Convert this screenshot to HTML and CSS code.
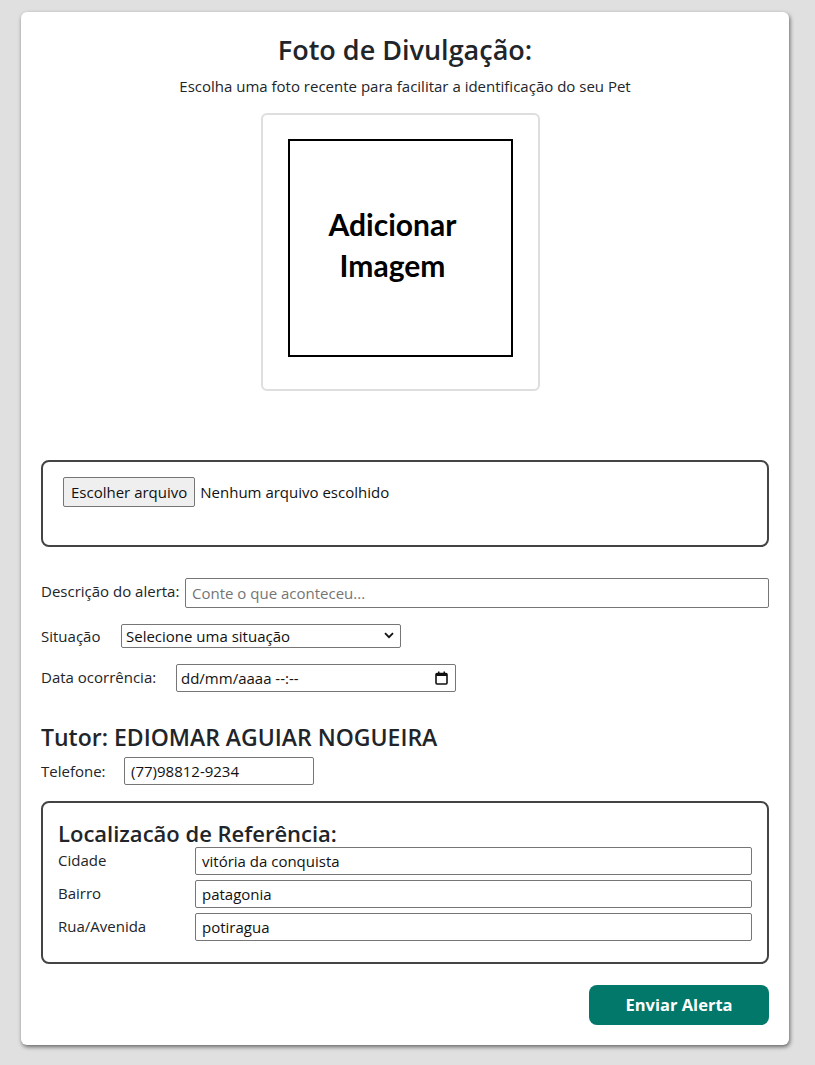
FILE: index.html
```html
<!DOCTYPE html>
<html lang="pt-BR">
<head>
<meta charset="utf-8">
<title>Alerta</title>
<link rel="stylesheet" href="styles.css">
</head>
<body>
<main class="card">
  <h1 class="title">Foto de Divulgação:</h1>
  <p class="subtitle">Escolha uma foto recente para facilitar a identificação do seu Pet</p>
  <div class="photo-frame">
    <div class="photo-placeholder">Adicionar<br>Imagem</div>
  </div>

  <div class="file-box">
    <button class="file-btn" type="button">Escolher arquivo</button>
    <span class="file-name">Nenhum arquivo escolhido</span>
  </div>

  <div class="row row-desc">
    <label class="lbl">Descrição do alerta:</label>
    <div class="field field-desc"><span class="placeholder">Conte o que aconteceu...</span></div>
  </div>
  <div class="row row-sit">
    <label class="lbl lbl-sit">Situação</label>
    <div class="field field-select"><span>Selecione uma situação</span>
      <svg class="chev" width="10" height="7" viewBox="0 0 10 7"><path d="M1 1.2 L5 5.2 L9 1.2" fill="none" stroke="#111" stroke-width="1.8"/></svg>
    </div>
  </div>
  <div class="row row-date">
    <label class="lbl lbl-date">Data ocorrência:</label>
    <div class="field field-date"><span>dd/mm/aaaa --:--</span>
      <svg class="cal" width="13" height="14" viewBox="0 0 13 14"><rect x="1" y="2.5" width="11" height="10.5" rx="1" fill="none" stroke="#111" stroke-width="1.6"/><rect x="1" y="2.5" width="11" height="2.5" fill="#111"/><rect x="3" y="0.5" width="1.5" height="2.5" fill="#111"/><rect x="8.5" y="0.5" width="1.5" height="2.5" fill="#111"/></svg>
    </div>
  </div>

  <h2 class="tutor">Tutor: EDIOMAR AGUIAR NOGUEIRA</h2>
  <div class="row row-tel">
    <label class="lbl lbl-tel">Telefone:</label>
    <div class="field field-tel">(77)98812-9234</div>
  </div>

  <section class="loc-box">
    <h3 class="loc-title">Localizacão de Referência:</h3>
    <div class="loc-row">
      <label class="loc-lbl">Cidade</label>
      <div class="field loc-field">vitória da conquista</div>
    </div>
    <div class="loc-row">
      <label class="loc-lbl">Bairro</label>
      <div class="field loc-field">patagonia</div>
    </div>
    <div class="loc-row">
      <label class="loc-lbl">Rua/Avenida</label>
      <div class="field loc-field">potiragua</div>
    </div>
  </section>

  <div class="actions">
    <button class="send-btn" type="button">Enviar Alerta</button>
  </div>
</main>
</body>
</html>
```

FILE: styles.css
```css
* { box-sizing: border-box; }
html, body { margin: 0; padding: 0; }
body {
  background: #dfe0df;
  font-family: "Open Sans", "Noto Sans", sans-serif;
  color: #212529;
  padding: 12px 0 20px 21px;
}
.card {
  width: 768px;
  height: 1033px;
  background: #fff;
  border-radius: 6px;
  box-shadow: 1px 2px 4px rgba(0,0,0,0.55);
  padding: 20px 20px 20px 20px;
  display: flex;
  flex-direction: column;
}
.title {
  margin: 0;
  text-align: center;
  font-size: 27px;
  font-weight: 600;
  line-height: 36px;
  color: #212529;
}
.subtitle {
  margin: 8px 0 0;
  text-align: center;
  font-size: 15px;
  line-height: 20px;
  color: #212529;
}
.photo-frame {
  align-self: center;
  margin-top: 17px;
  margin-right: 10px;
  width: 279px;
  height: 280px;
  border: 2px solid #dedede;
  border-radius: 6px;
  display: flex;
  align-items: flex-start;
  justify-content: center;
  padding-top: 24px;
  padding-left: 1px;
}
.photo-placeholder {
  width: 225px;
  height: 218px;
  border: 2px solid #000;
  display: flex;
  align-items: center;
  justify-content: center;
  text-align: center;
  font-family: "Lato", "Open Sans", sans-serif;
  font-weight: 700;
  font-size: 30px;
  line-height: 41px;
  color: #000;
  padding: 0 16px 6px 0;
}
.file-box {
  margin-top: 69px;
  height: 87px;
  border: 2px solid #444;
  border-radius: 8px;
  padding: 15px 20px;
  display: flex;
  align-items: flex-start;
  gap: 5px;
}
.file-btn {
  font-family: inherit;
  font-size: 15px;
  color: #111;
  background: #efefef;
  border: 1px solid #767676;
  border-radius: 2px;
  height: 30px;
  padding: 0 7px;
  line-height: 26px;
}
.file-name {
  font-size: 15px;
  line-height: 30px;
  color: #111;
}
.row {
  display: flex;
  align-items: center;
}
.lbl {
  font-size: 15px;
  color: #212529;
}
.field {
  border: 1px solid #767676;
  border-radius: 2px;
  font-size: 15px;
  color: #111;
  display: flex;
  align-items: center;
  padding: 0 6px;
}
.row-desc { margin-top: 31px; }
.row-desc .lbl { width: 144px; position: relative; top: -2px; white-space: nowrap; }
.field-desc { flex: 1; height: 30px; }
.placeholder { color: #757575; }
.row-sit { margin-top: 16px; }
.lbl-sit { width: 80px; }
.field-select { width: 280px; height: 24px; justify-content: space-between; padding: 0 6px 0 4px; }
.row-date { margin-top: 16px; }
.lbl-date { width: 135px; position: relative; top: -1px; }
.field-date { width: 280px; height: 28px; justify-content: space-between; padding: 0 7px 0 4px; }
.tutor {
  margin: 29px 0 0;
  font-size: 23px;
  font-weight: 600;
  line-height: 32px;
  color: #212529;
}
.row-tel { margin-top: 4px; }
.lbl-tel { width: 83px; }
.field-tel { width: 190px; height: 28px; }
.loc-box {
  margin-top: 16px;
  height: 164px;
  border: 2px solid #444;
  border-radius: 8px;
  padding: 16px 15px 0 15px;
}
.loc-title {
  margin: 0;
  font-size: 22px;
  font-weight: 600;
  line-height: 28px;
  color: #212529;
}
.loc-row {
  display: flex;
  align-items: center;
  margin-bottom: 5px;
}
.loc-lbl {
  width: 137px;
  font-size: 15px;
  line-height: 20px;
  color: #212529;
  position: relative;
  top: -1px;
}
.loc-field {
  flex: 1;
  height: 28px;
}
.actions {
  margin-top: 21px;
  display: flex;
  justify-content: flex-end;
}
.send-btn {
  width: 180px;
  height: 40px;
  background: #02786a;
  color: #fff;
  border: none;
  border-radius: 8px;
  font-family: "Open Sans", sans-serif;
  font-weight: 700;
  font-size: 16.5px;
}
```
